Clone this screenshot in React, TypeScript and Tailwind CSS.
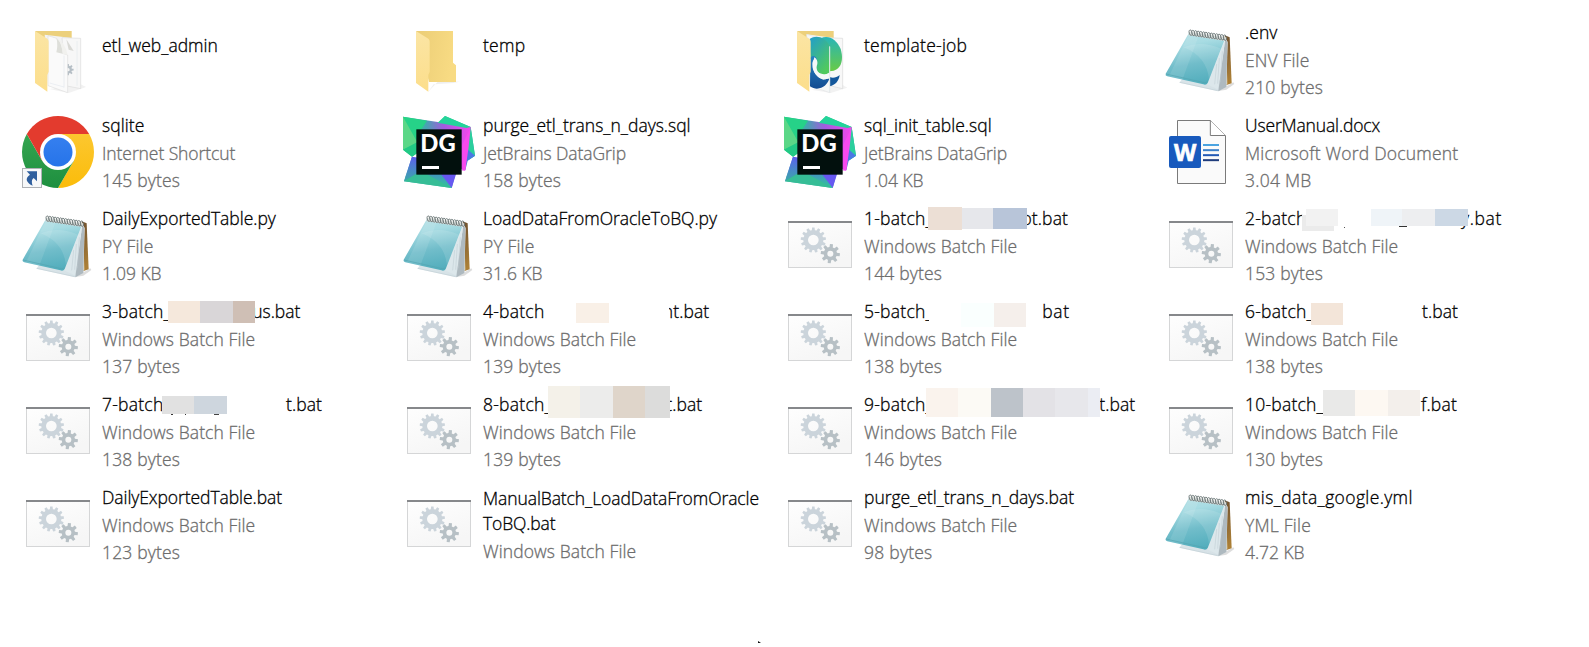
import { useLayoutEffect, useRef, type ReactNode } from "react";

type Block = [x: number, y: number, w: number, h: number, color: string];
type Icon = "papers" | "folder" | "edge" | "notepad" | "chrome" | "datagrip" | "word" | "batch";
type Run = [text: string, width: number];

interface Entry {
  icon: Icon;
  name: Run[];
  total?: number;
  blocks?: Block[];
  kind?: Run;
  size?: Run;
}

/* Text whose tracking is adjusted so that it fills the given advance width. */
function Fit({ run, className = "" }: { run: Run; className?: string }) {
  const ref = useRef<HTMLSpanElement>(null);
  const [text, width] = run;
  useLayoutEffect(() => {
    const el = ref.current;
    if (!el) return;
    const apply = () => {
      el.style.letterSpacing = "0px";
      el.style.letterSpacing = `${(width - el.getBoundingClientRect().width) / text.length}px`;
    };
    apply();
    document.fonts?.ready.then(apply);
  }, [text, width]);
  return (
    <span ref={ref} className={`inline-block whitespace-pre ${className}`}>
      {text}
    </span>
  );
}

function gear(cx: number, cy: number, outer: number, body: number, hole: number, teeth: number, phase: number) {
  const pts: string[] = [];
  const step = (Math.PI * 2) / teeth;
  const at = (r: number, a: number) => `${(cx + r * Math.cos(a)).toFixed(1)} ${(cy + r * Math.sin(a)).toFixed(1)}`;
  for (let i = 0; i < teeth; i++) {
    const a = i * step + phase;
    pts.push(at(body, a - step * 0.32), at(outer, a - step * 0.2), at(outer, a + step * 0.2), at(body, a + step * 0.32));
  }
  return `M${pts.join("L")}Z M${cx - hole} ${cy}a${hole} ${hole} 0 1 0 ${hole * 2} 0a${hole} ${hole} 0 1 0 ${-hole * 2} 0Z`;
}

const BIG_GEAR = gear(88, 93, 38, 30, 16, 13, -1.57);
const SMALL_GEAR = gear(139, 134, 29, 20, 9, 8, -1.45);
const TINY_GEAR = gear(138, 140, 17, 12, 5, 8, 0);

function Svg({ children }: { children: ReactNode }) {
  return (
    <svg viewBox="0 0 216 216" className="block h-[72px] w-[72px] shrink-0 overflow-visible">
      {children}
    </svg>
  );
}

function FolderFlap() {
  return <path d="M39 24L76 47Q80 50 80 56V146L76 156V206L39 180Z" fill="url(#flap)" />;
}

const icons: Record<Icon, ReactNode> = {
  papers: (
    <Svg>
      <path d="M82 198L140 210L192 192L176 184Z" fill="#e9e9e9" opacity=".6" />
      <path d="M39 24H149V80H78Z" fill="#ecd07c" />
      <path d="M68 35L150 45V190L78 185Z" fill="#f3f3f3" />
      <path d="M120 44L176 46V197L130 188Z" fill="#f7f7f7" stroke="#dcdcdc" strokeWidth="2" />
      <path d="M165 54V188" stroke="#e6ebef" strokeWidth="2" />
      <path d={TINY_GEAR} fill="#b5bec5" fillRule="evenodd" />
      <path d="M133 49L155 84L140 80Z" fill="#d9d9d5" />
      <path d="M78 38L104 46L121 91L137 96V209L78 188Z" fill="#fafafa" stroke="#d6d6d6" strokeWidth="1.5" />
      <path d="M126 98V194M83 180L126 192" fill="none" stroke="#e4e9ee" strokeWidth="2" />
      <path d="M104 46Q120 59 122 92L103 88Q108 70 104 46Z" fill="#dedfda" />
      <path d="M104 46Q127 55 137 95L122 92Q120 59 104 46Z" fill="#f1f1ee" />
      <FolderFlap />
    </Svg>
  ),
  folder: (
    <Svg>
      <path d="M76 206L104 176H170L150 180L92 184Z" fill="#e8e8e8" opacity=".7" />
      <path d="M39 24H150V119L159 127V177H78Z" fill="url(#folderBack)" />
      <FolderFlap />
    </Svg>
  ),
  edge: (
    <Svg>
      <path d="M82 200L140 210L190 194L176 186Z" fill="#e9e9e9" opacity=".6" />
      <path d="M39 24H149V80H78Z" fill="#ecd07c" />
      <path d="M68 34L149 45V195H78Z" fill="#f3f5f6" />
      <path d="M126 44L176 46V197L136 188Z" fill="#f8f8f8" stroke="#dadada" strokeWidth="2" />
      <path d="M110 46C132 34 158 48 170 78C180 112 172 143 137 145Z" fill="url(#edgeGreen)" />
      <path d="M137 162C147 166 157 164 167 156C165 174 154 186 137 190Z" fill="#14579b" />
      <path d="M68 34L110 46L137 72V209L78 188Z" fill="#f5f7f7" stroke="#dcdfe0" strokeWidth="1.5" />
      <path d="M77 48C98 34 124 44 136 68V148C131 155 122 156 113 152C98 150 94 138 98 129C106 112 92 97 79 109Z" fill="url(#edgeTeal)" />
      <path d="M79 104C86 96 96 98 99 110L90 112C82 138 94 164 118 170L136 166C132 188 103 208 78 190Z" fill="url(#edgeBlue)" />
      <path d="M90 103C103 108 97 119 97 128C97 146 107 155 120 155L137 150V166C110 176 84 154 85 124C85 113 92 109 90 103Z" fill="#f5f8f8" />
      <path d="M137 70V208" stroke="#e2eaec" strokeWidth="2.500" />
      <FolderFlap />
    </Svg>
  ),
  notepad: (
    <Svg>
      <path d="M160 204L205 178L208 183L184 200Z" fill="#bbb" opacity=".5" />
      <path d="M179 37L194 43L200 181L178 188Z" fill="url(#brown)" />
      <path d="M179 42L183 43L187 182L180 188Z" fill="#ead7af" />
      <path d="M181 45L188 57L184 192L160 205L43 179L80 130Z" fill="url(#pages)" />
      <path d="M181 45L187 58L184 192L160 205Z" fill="#aeb9bf" />
      <path d="M178 55L126 184L158 199L178 70Z" fill="#dce7eb" />
      <path d="M172 85L166 178M163 105L158 182M155 123L149 184M44 178L158 203" stroke="#bccbd1" strokeWidth="1.5" />
      <path d="M73 28L181 45L128 180Q124 187 115 184L7 160Q0 158 2 152Z" fill="url(#cover)" />
      <path d="M71 36L100 41L52 170L12 160Z" fill="#ffffff" opacity=".1" />
      <path d="M56 73Q110 51 170 78L132 169Q125 100 56 73Z" fill="#ffffff" opacity=".12" />
      <path d="M3 153L118 179Q124 180 128 174" fill="none" stroke="#54a4b0" strokeWidth="2" />
      <path d="M72 27L184 44L181 54L70 37Z" fill="#d5dad8" />
      {Array.from({ length: 14 }, (_, i) => (
        <g key={i} transform={`translate(${77 + i * 7.9} ${29 + i * 1.15})`}>
          <ellipse rx="4.5" ry="8.5" fill="none" stroke="#707b7b" strokeWidth="2.6" transform="rotate(-15)" />
          <path d="M-2 -6L1 4" stroke="#e8e9e5" strokeWidth="2" />
        </g>
      ))}
    </Svg>
  ),
  chrome: (
    <Svg>
      <path d="M108 108L14.5 54A108 108 0 0 1 201.5 54Z" fill="#e33b2e" />
      <path d="M108 54H201.5A108 108 0 0 1 108 216L155 135Z" fill="url(#chromeYellow)" />
      <path d="M14.5 54A108 108 0 0 0 108 216L155 135L61 135Z" fill="url(#chromeGreen)" />
      <path d="M14.5 54L61 135L108 108V54Z" fill="#e33b2e" />
      <circle cx="108" cy="108" r="54" fill="#fff" />
      <circle cx="108" cy="108" r="43.5" fill="url(#chromeBlue)" />
      <rect x="1.5" y="157.5" width="57" height="57" fill="#f7f8f9" stroke="#aeb1b5" strokeWidth="3" />
      <path d="M14 166H45V196L35 186C28 191 29 200 32 209C15 201 6 187 24 176Z" fill="#2f5f9e" />
    </Svg>
  ),
  datagrip: (
    <Svg>
      <path d="M100 27L126 0L203 33L216 119L194 134L187 163L150 150Z" fill="url(#dgRight)" />
      <path d="M0 2L203 33L186 164L60 100Z" fill="url(#dgTop)" />
      <path d="M0 2L72 14L42 60L42 112L27 122L0 101Z" fill="#26d288" />
      <path d="M0 2L43 79L0 101Z" fill="#5bd787" />
      <path d="M0 101L43 79V111L27 122Z" fill="#22c985" />
      <path d="M126 0L203 33L190 36L104 20Z" fill="#25d49a" />
      <path d="M203 33L216 119L195 133L185 92Z" fill="#2bcf9c" />
      <path d="M185 92L216 119L190 136Z" fill="#4b78e4" />
      <path d="M203 33L178 86V164L187 163L197 92Z" fill="#f84aee" />
      <path d="M27 122L80 130L158 172L146 216L3 196Z" fill="url(#dgBottom)" />
      <path d="M27 122L50 176L3 196Z" fill="url(#dgCorner)" />
      <path d="M3 196L54 164L146 216Z" fill="#36bd96" />
      <path d="M112 172L160 172L146 216Z" fill="#6758f1" />
      <rect x="40" y="40" width="136" height="136" fill="#02100d" />
      <text x="52" y="108" textLength="106" lengthAdjust="spacingAndGlyphs" fill="#fff" className="font-['Lato',sans-serif] text-[71px] font-black [-webkit-text-stroke:0px]">
        DG
      </text>
      <rect x="57" y="150" width="51" height="9" fill="#fff" />
    </Svg>
  ),
  word: (
    <Svg>
      <path d="M37.500 13.500H136L181.500 59V202.500H37.500Z" fill="#fafafa" stroke="#7a7a7a" strokeWidth="3" />
      <path d="M136 13.500V58.500H181" fill="#fff" stroke="#7a7a7a" strokeWidth="3" />
      <path d="M114 87H162" stroke="#4aa3e0" strokeWidth="6" />
      <path d="M114 102.500H162" stroke="#3c80c9" strokeWidth="6" />
      <path d="M114 117.500H162" stroke="#2259b5" strokeWidth="6" />
      <path d="M114 132.500H162" stroke="#1f3c7c" strokeWidth="6" />
      <rect x="12" y="60" width="96" height="96" rx="6" fill="#185abd" />
      <text x="27" y="134" textLength="67" lengthAdjust="spacingAndGlyphs" fill="#fff" stroke="#fff" strokeWidth="2" className="font-['Open_Sans',sans-serif] text-[70px] font-bold [-webkit-text-stroke:0px]">
        W
      </text>
    </Svg>
  ),
  batch: (
    <Svg>
      <rect x="13.500" y="37.500" width="189" height="138" fill="url(#batchFill)" stroke="#d5d6d7" strokeWidth="3" />
      <rect x="12" y="36" width="192" height="6" fill="#86888b" />
      <path d={BIG_GEAR} fill="#cbd4db" fillRule="evenodd" />
      <path d={SMALL_GEAR} fill="#b7c0c5" fillRule="evenodd" />
    </Svg>
  ),
};

function Gradient({ id, from, to, x2 = 0, y2 = 1 }: { id: string; from: string; to: string; x2?: number; y2?: number }) {
  return (
    <linearGradient id={id} x1="0" y1="0" x2={x2} y2={y2}>
      <stop stopColor={from} />
      <stop offset="1" stopColor={to} />
    </linearGradient>
  );
}

function Gradients() {
  return (
    <svg className="absolute h-0 w-0">
      <defs>
        <Gradient id="flap" from="#fbe5a4" to="#fcde8b" />
        <Gradient id="folderBack" from="#ebcd76" to="#f8db83" x2={1} y2={0.2} />
        <Gradient id="edgeGreen" from="#28b5b8" to="#68cb45" />
        <Gradient id="edgeTeal" from="#219dcc" to="#50c95e" x2={0.6} />
        <Gradient id="edgeBlue" from="#2583c4" to="#134c91" />
        <Gradient id="brown" from="#6d5031" to="#ab7f36" x2={0.2} />
        <Gradient id="pages" from="#f5f8fa" to="#d4e0e5" />
        <linearGradient id="cover" x1=".35" y1="0" x2=".55" y2="1">
          <stop stopColor="#b4dfe5" />
          <stop offset=".22" stopColor="#a8dce3" />
          <stop offset=".6" stopColor="#71bdca" />
          <stop offset="1" stopColor="#51adbc" />
        </linearGradient>
        <Gradient id="chromeYellow" from="#fcc72f" to="#fbbc0a" />
        <Gradient id="chromeGreen" from="#34a550" to="#1e8f3f" />
        <Gradient id="chromeBlue" from="#357fef" to="#2674e9" />
        <Gradient id="dgRight" from="#23d18b" to="#4a75e5" />
        <Gradient id="dgCorner" from="#5b63ee" to="#3aa8a8" />
        <linearGradient id="dgTop" x1="0" y1="0" x2="1" y2="0">
          <stop stopColor="#27d487" />
          <stop offset=".35" stopColor="#48a2b2" />
          <stop offset=".6" stopColor="#a35be0" />
          <stop offset="1" stopColor="#f648ec" />
        </linearGradient>
        <Gradient id="dgBottom" from="#5d5cec" to="#2fc59a" />
        <Gradient id="batchFill" from="#fefefe" to="#f6f6f6" x2={0.5} />
      </defs>
    </svg>
  );
}

const batch = (prefix: Run, suffix: Run, total: number, bytes: string, blocks: Block[]): Entry => ({
  icon: "batch",
  name: [prefix, suffix],
  total,
  blocks,
  kind: ["Windows Batch File", 153.3],
  size: [`${bytes} bytes`, 78],
});

const entries: Entry[] = [
  { icon: "papers", name: [["etl_web_admin", 115.8]] },
  { icon: "folder", name: [["temp", 42.3]] },
  { icon: "edge", name: [["template-job", 103.3]] },
  { icon: "notepad", name: [[".env", 32.5]], kind: ["ENV File", 64.5], size: ["210 bytes", 78] },

  { icon: "chrome", name: [["sqlite", 42.5]], kind: ["Internet Shortcut", 133.3], size: ["145 bytes", 78] },
  { icon: "datagrip", name: [["purge_etl_trans_n_days.sql", 207.5]], kind: ["JetBrains DataGrip", 143], size: ["158 bytes", 78] },
  { icon: "datagrip", name: [["sql_init_table.sql", 127.8]], kind: ["JetBrains DataGrip", 143], size: ["1.04 KB", 59.5] },
  { icon: "word", name: [["UserManual.docx", 135]], kind: ["Microsoft Word Document", 213.3], size: ["3.04 MB", 66.5] },

  { icon: "notepad", name: [["DailyExportedTable.py", 173.8]], kind: ["PY File", 51.5], size: ["1.09 KB", 59.5] },
  { icon: "notepad", name: [["LoadDataFromOracleToBQ.py", 234]], kind: ["PY File", 51.5], size: ["31.6 KB", 59.5] },
  batch(["1-batch_", 69], ["ot.bat", 46.5], 204, "144", [
    [64, -2, 34, 23, "#ecdfd5"],
    [98, -1, 31, 21, "#e6e7eb"],
    [129, -1, 34, 21, "#b8c5d9"],
  ]),
  batch(["2-batch", 61.5], ["y.bat", 41], 257, "153", [
    [57.3, 6, 32, 16, "#ebebeb"],
    [61, 0, 32, 17, "#f2f2f2"],
    [126, 0, 31, 17, "#eff4f8"],
    [157, 0, 33, 17, "#edeef0"],
    [190, 0, 33, 17, "#ccd8e5"],
    [99, 18, 1, 1, "#555555"],
    [154, 17, 8, 1, "#333333"],
  ]),

  batch(["3-batch_", 69], ["us.bat", 48], 198.3, "137", [
    [66, -1, 32, 22, "#f5e8dc"],
    [98, -1, 33, 22, "#d9d6d8"],
    [131, -1, 22, 22, "#cfbfb5"],
  ]),
  batch(["4-batch", 61.5], ["nt.bat", 46.5], 226.3, "139", [
    [93, 1, 33, 20, "#f9f0e7"],
    [126, -1, 60.4, 22, "#ffffff"],
  ]),
  batch(["5-batch_", 69], ["bat", 27.5], 205.8, "138", [
    [64.7, 10, 20, 14, "#ffffff"],
    [97, 1, 33, 24, "#fafffe"],
    [130, 1, 32, 24, "#f5efeb"],
  ]),
  batch(["6-batch_", 69], ["t.bat", 36], 213, "138", [[66, 1, 32, 22, "#f3e5d9"]]),

  batch(["7-batch", 61.5], ["t.bat", 36], 220, "138", [
    [60, 1, 32, 18, "#e1e1e1"],
    [92, 1, 33, 18, "#ced6de"],
    [69, 19, 2, 1, "#333333"],
    [83, 19, 1, 1, "#333333"],
    [112, 19, 5, 1, "#444444"],
  ]),
  batch(["8-batch_", 69], ["t.bat", 36], 219.3, "139", [
    [65, -9, 32, 32, "#f4f1e9"],
    [97, -9, 33, 32, "#ececeb"],
    [130, -9, 32, 32, "#dfd5ca"],
    [162, -9, 25, 32, "#dcdcdb"],
  ]),
  batch(["9-batch_", 69], ["t.bat", 36], 271.3, "146", [
    [62, -7, 32, 29, "#faf3ed"],
    [94, -7, 33, 29, "#fcfaf5"],
    [127, -7, 32, 29, "#bdc3ca"],
    [159, -7, 32, 29, "#e3e2e6"],
    [191, -7, 33, 29, "#e7e7eb"],
    [224, -7, 12, 29, "#ebedf3"],
  ]),
  batch(["10-batch_", 79], ["f.bat", 36], 212, "130", [
    [78, -5, 32, 26, "#e9e9e8"],
    [110, -5, 33, 26, "#fdf8f2"],
    [143, -5, 32, 26, "#f3efeb"],
  ]),

  { icon: "batch", name: [["DailyExportedTable.bat", 180]], kind: ["Windows Batch File", 153.3], size: ["123 bytes", 78] },
  { icon: "batch", name: [["ManualBatch_LoadDataFromOracle", 276], ["ToBQ.bat", 72.5]], kind: ["Windows Batch File", 153.3] },
  { icon: "batch", name: [["purge_etl_trans_n_days.bat", 210]], kind: ["Windows Batch File", 153.3], size: ["98 bytes", 68.5] },
  { icon: "notepad", name: [["mis_data_google.yml", 167.8]], kind: ["YML File", 66], size: ["4.72 KB", 59.5] },
];

function Label({ entry }: { entry: Entry }) {
  const { name, total, blocks, kind, size } = entry;
  if (!kind) {
    return (
      <div className="flex h-[72px] flex-col pt-2 leading-7">
        <Fit run={name[0]} />
      </div>
    );
  }
  const wrapped = name.length > 1 && !total;
  return (
    <div className="relative -mt-[3px] flex flex-col">
      {wrapped ? (
        <div className="flex h-[54px] flex-col pt-px leading-[25px]">
          {name.map((run) => (
            <Fit key={run[0]} run={run} className="self-start" />
          ))}
        </div>
      ) : (
        <div className="flex h-7 justify-between leading-6" style={total ? { width: total } : undefined}>
          {name.map((run) => (
            <Fit key={run[0]} run={run} />
          ))}
        </div>
      )}
      {blocks?.map(([x, y, w, h, color]) => (
        <span key={`${x}:${y}`} className="absolute" style={{ left: x, top: y + 3, width: w, height: h, background: color }} />
      ))}
      <div className="h-[27px] leading-6 text-[#6d6d6d]">
        <Fit run={kind} />
      </div>
      {size && (
        <div className="h-[27px] leading-6 text-[#6d6d6d]">
          <Fit run={size} />
        </div>
      )}
    </div>
  );
}

export default function App() {
  return (
    <main className="flex h-[647px] w-[1589px] flex-col justify-between overflow-hidden bg-white pl-[22px] pt-[23px] font-['Open_Sans','Noto_Sans',sans-serif] text-[17.5px] font-light text-black [-webkit-text-stroke:0.3px]">
      <Gradients />
      <div className="grid auto-rows-[93px] grid-cols-[repeat(4,381px)]">
        {entries.map((entry) => (
          <div key={entry.name[0][0]} className="flex items-start gap-2">
            {icons[entry.icon]}
            <Label entry={entry} />
          </div>
        ))}
      </div>
      <svg viewBox="0 0 4 6" className="ml-[736px] h-[6px] w-1">
        <path d="M0 0L3 2H0Z" fill="#111" />
      </svg>
    </main>
  );
}
